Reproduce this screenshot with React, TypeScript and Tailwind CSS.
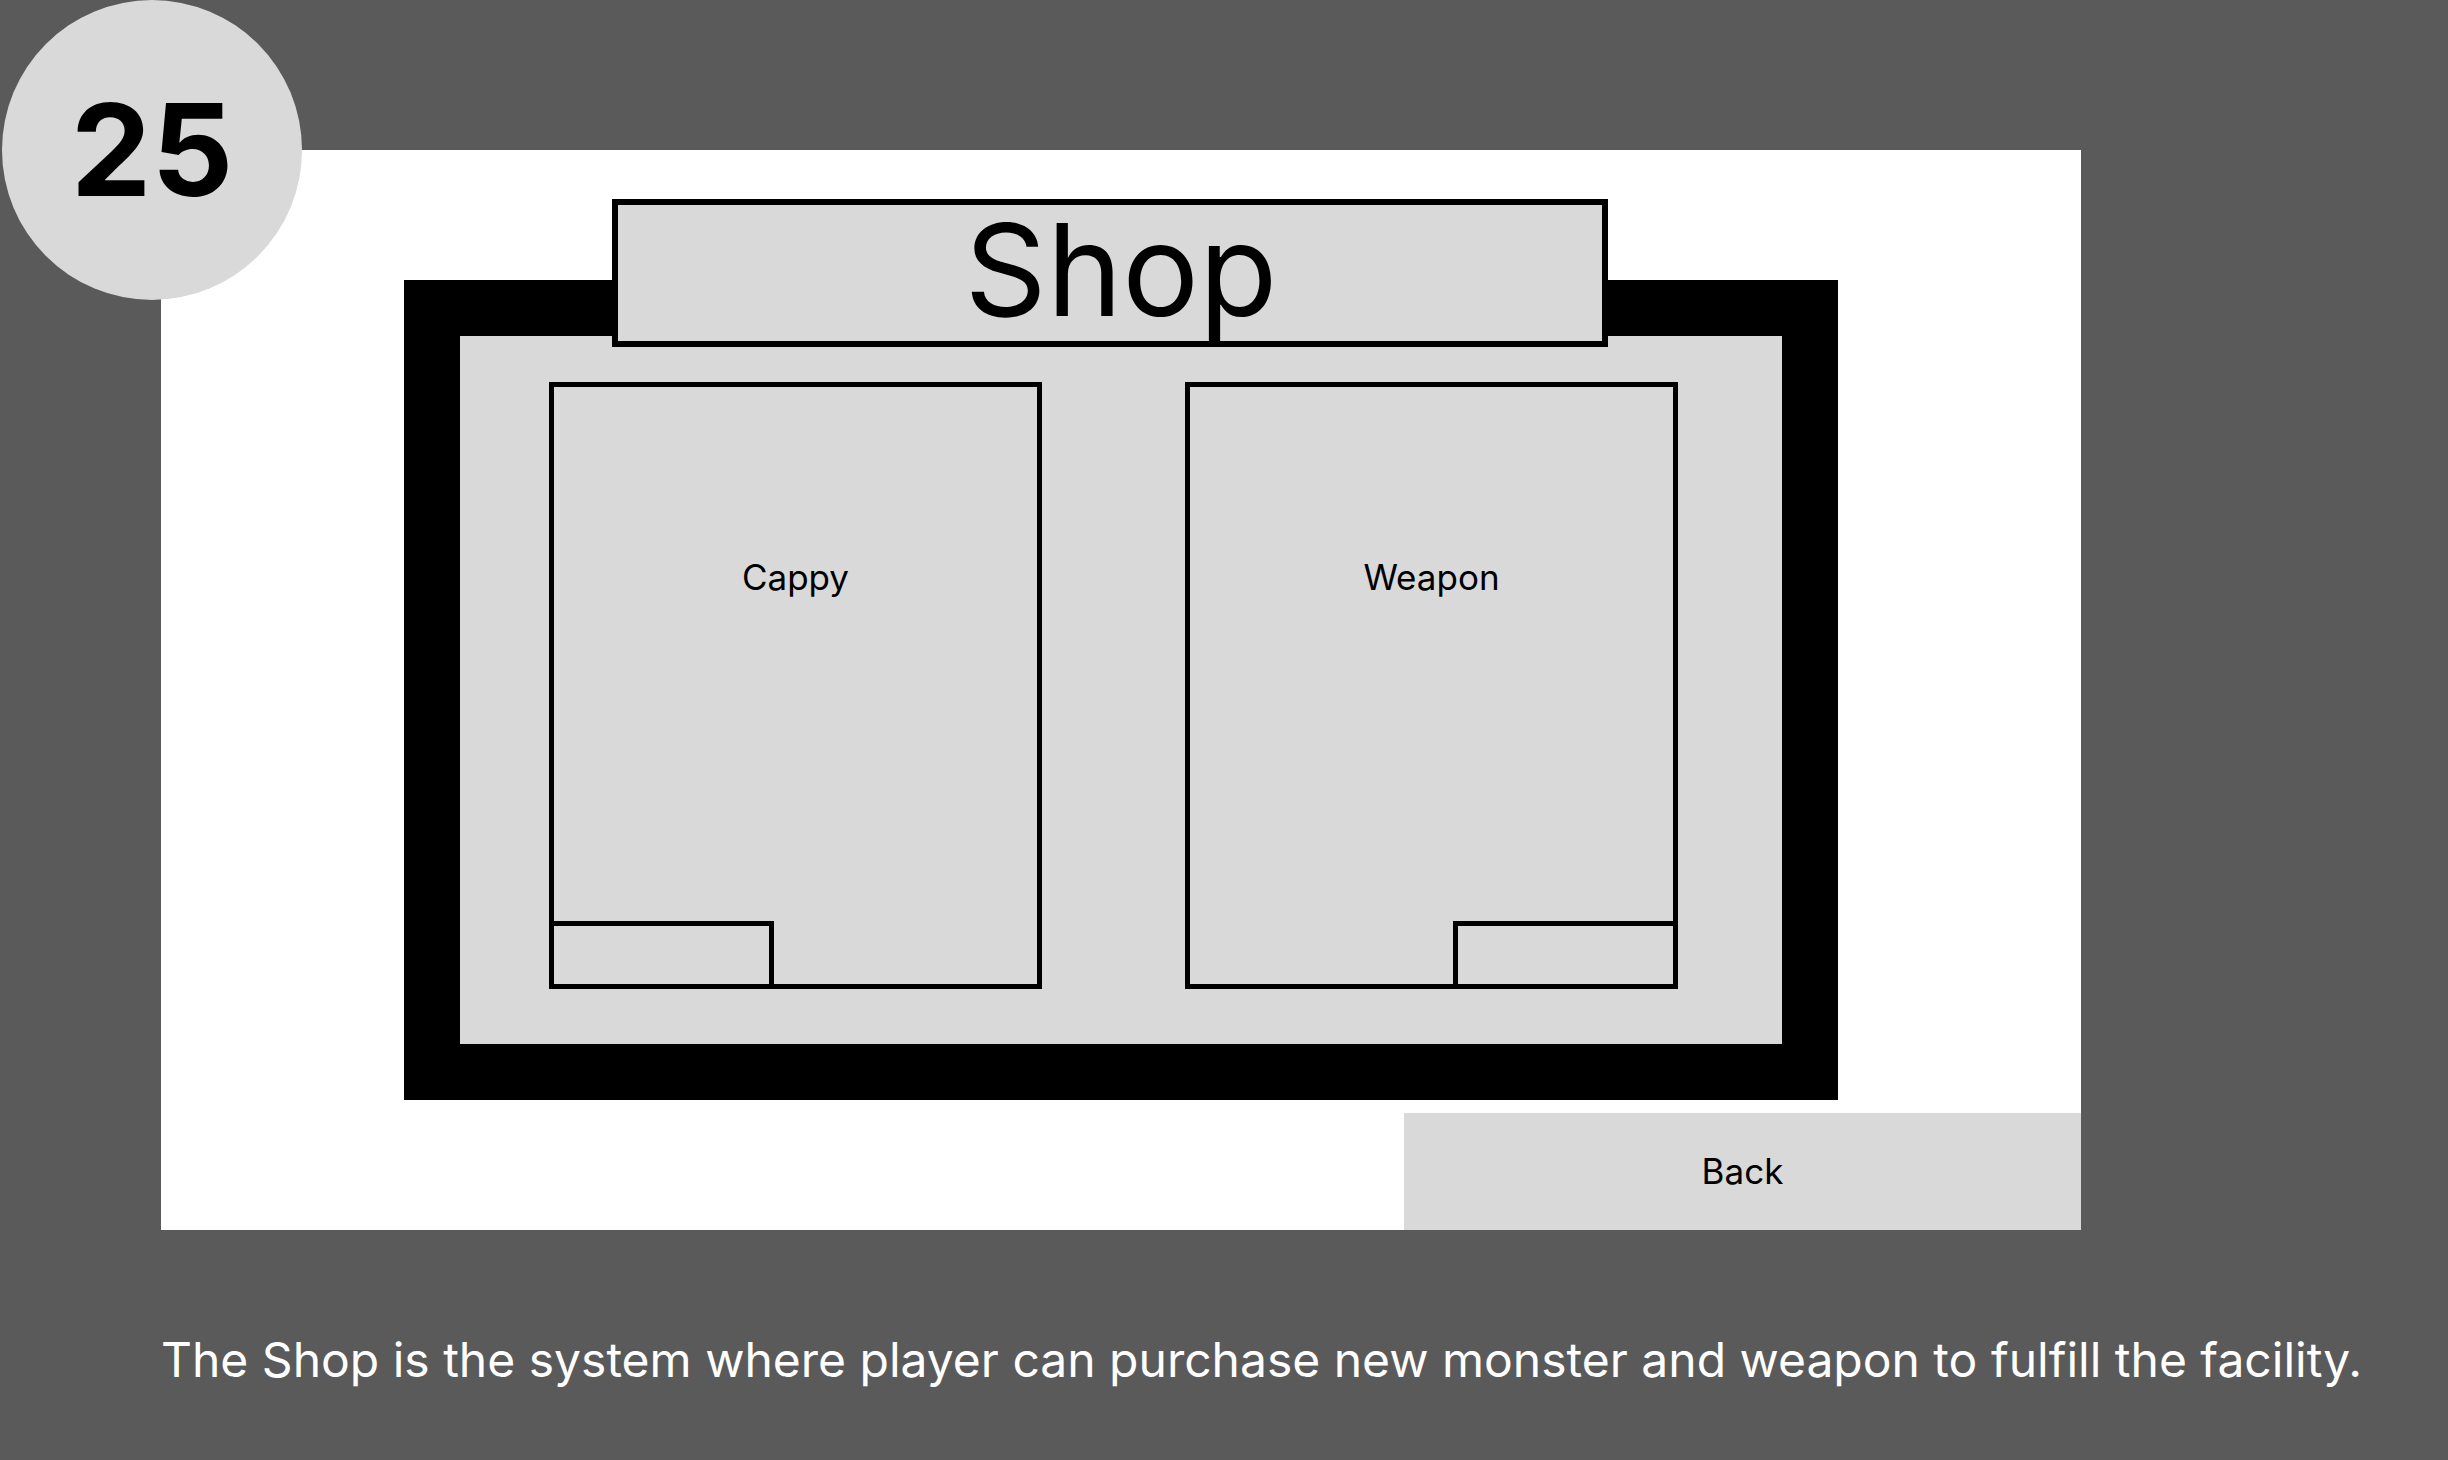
import clsx from "clsx";

const FONT = "font-['Inter','Liberation_Sans',sans-serif]";

interface ShopCardProps {
  label: string;
  tagSide: "left" | "right";
}

function ShopCard({ label, tagSide }: ShopCardProps) {
  return (
    <div className="w-[493px] h-[607px] border-[5px] border-black bg-[#d9d9d9] flex flex-col items-center">
      <p className="mt-[173px] text-[35px] leading-none text-black">{label}</p>
      <div className="flex-1" />
      <div
        className={clsx(
          "w-[220px] h-[63px] border-t-[5px] border-black",
          tagSide === "left" ? "self-start border-r-[5px]" : "self-end border-l-[5px]",
        )}
      />
    </div>
  );
}

export default function App() {
  return (
    <div className={clsx("relative w-[2448px] h-[1460px] bg-[#5a5a5a] overflow-hidden", FONT)}>
      {/* page number badge */}
      <div className="absolute left-[2px] top-0 z-20 w-[300px] h-[300px] rounded-full bg-[#d9d9d9] flex items-center justify-center">
        <span className="text-[128px] font-bold leading-none text-black">25</span>
      </div>

      <div className="pt-[150px] pl-[161px]">
        <div className="w-[1920px] h-[1080px] bg-white pt-[49px] flex flex-col">
          {/* title tab */}
          <div className="relative z-10 ml-[451px] w-[996px] h-[148px] border-[6px] border-black bg-[#d9d9d9] flex justify-center items-start pl-[22px]">
            <h1 className="mt-[1px] text-[128px] font-normal leading-none text-black">Shop</h1>
          </div>

          {/* shop frame */}
          <div className="-mt-[67px] ml-[243px] w-[1434px] h-[820px] bg-black p-[56px]">
            <div className="w-full h-full bg-[#d9d9d9] pt-[46px] pl-[89px] flex gap-[143px] items-start">
              <ShopCard label="Cappy" tagSide="left" />
              <ShopCard label="Weapon" tagSide="right" />
            </div>
          </div>

          <button className="mt-[13px] ml-auto w-[677px] h-[117px] bg-[#d9d9d9] flex items-center justify-center text-[35px] leading-none text-black">
            Back
          </button>
        </div>
      </div>

      <p className="mt-[106px] pl-[161px] text-[48px] leading-none text-white">
        The Shop is the system where player can purchase new monster and weapon to fulfill the facility.
      </p>
    </div>
  );
}
